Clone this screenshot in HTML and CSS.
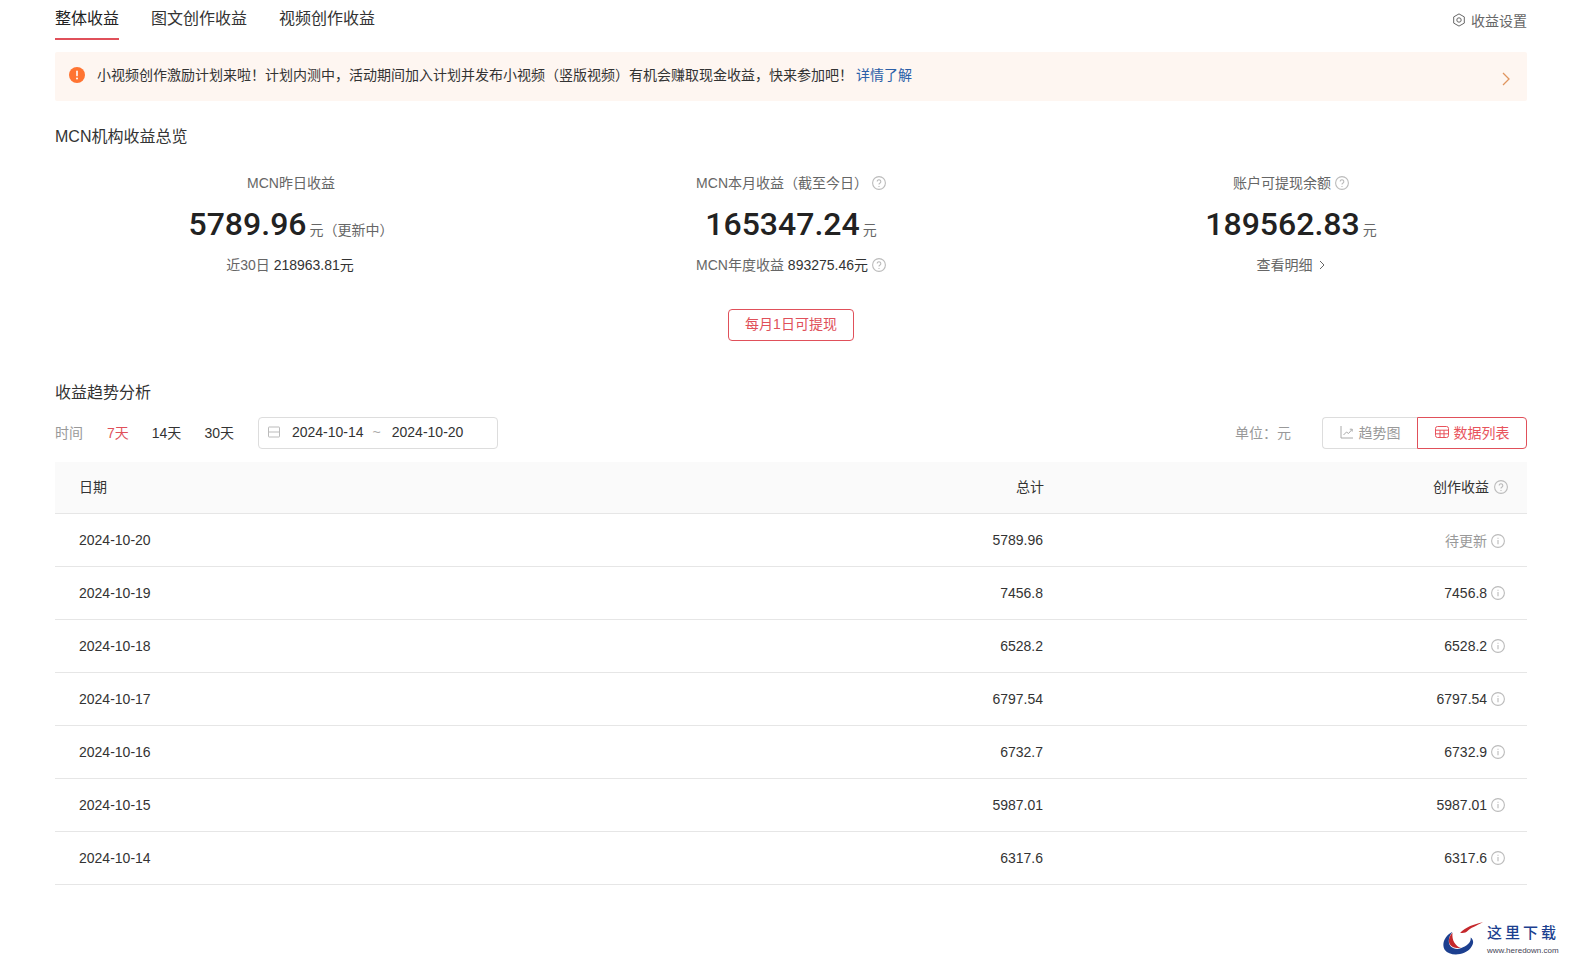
FILE: index.html
```html
<!DOCTYPE html>
<html>
  <head>
    <meta charset="UTF-8" />
    <meta name="viewport" content="width=device-width, initial-scale=1.0" />
    <title>收益</title>
    <link rel="stylesheet" href="styles.css">
  </head>
  <body>
    <div class="page">
      <div class="tabs">
        <div class="tab-list">
          <div class="tab active">整体收益</div>
          <div class="tab">图文创作收益</div>
          <div class="tab">视频创作收益</div>
        </div>
        <div class="settings">
          <svg class="settings-icon" viewBox="0 0 14 14" fill="none" stroke="#666" stroke-width="1">
            <path d="M7 .9l5.3 3v6.2L7 13.1l-5.3-3V3.900z" stroke-linejoin="round"/>
            <circle cx="7" cy="7" r="2.200"/>
          </svg>
          <span>收益设置</span>
        </div>
      </div>

      <div class="notice">
        <svg class="notice-icon" viewBox="0 0 16 16">
          <circle cx="8" cy="8" r="8" fill="#ff7432"/>
          <rect x="7.200" y="3.600" width="1.600" height="5.800" rx=".8" fill="#fff"/>
          <circle cx="8" cy="11.500" r="1" fill="#fff"/>
        </svg>
        <div class="notice-text">小视频创作激励计划来啦！计划内测中，活动期间加入计划并发布小视频（竖版视频）有机会赚取现金收益，快来参加吧！<a class="notice-link">详情了解</a></div>
        <svg class="notice-arrow" viewBox="0 0 8 14" fill="none" stroke="#e0955f" stroke-width="1.300">
          <path d="M1 1l6 6-6 6"/>
        </svg>
      </div>

      <h2 class="section-title overview-title">MCN机构收益总览</h2>

      <div class="stats">
        <div class="stat">
          <div class="stat-label">MCN昨日收益</div>
          <div class="stat-value"><b>5789.96</b><span class="unit">元（更新中）</span></div>
          <div class="stat-sub shift-sub">近30日 <em>218963.81元</em></div>
        </div>
        <div class="stat">
          <div class="stat-label">MCN本月收益（截至今日）
            <svg class="help" viewBox="0 0 14 14"><circle cx="7" cy="7" r="6.400"/><path d="M5.200 5.500a1.800 1.800 0 1 1 2.800 1.500c-.7.400-1 .8-1 1.500"/><path d="M7 10v.9"/></svg>
          </div>
          <div class="stat-value"><b>165347.24</b><span class="unit">元</span></div>
          <div class="stat-sub">MCN年度收益 <em>893275.46元</em>
            <svg class="help" viewBox="0 0 14 14"><circle cx="7" cy="7" r="6.400"/><path d="M5.200 5.500a1.800 1.800 0 1 1 2.800 1.500c-.7.400-1 .8-1 1.500"/><path d="M7 10v.9"/></svg>
          </div>
        </div>
        <div class="stat">
          <div class="stat-label">账户可提现余额
            <svg class="help" viewBox="0 0 14 14"><circle cx="7" cy="7" r="6.400"/><path d="M5.200 5.500a1.800 1.800 0 1 1 2.800 1.500c-.7.400-1 .8-1 1.500"/><path d="M7 10v.9"/></svg>
          </div>
          <div class="stat-value"><b>189562.83</b><span class="unit">元</span></div>
          <div class="stat-sub">查看明细
            <svg class="detail-arrow" viewBox="0 0 6 10" fill="none" stroke="#666" stroke-width="1"><path d="M1 1l4 4-4 4"/></svg>
          </div>
        </div>
      </div>

      <div class="withdraw-wrap">
        <div class="withdraw">每月1日可提现</div>
      </div>

      <h2 class="section-title trend-title">收益趋势分析</h2>

      <div class="filters">
        <div class="filter-left">
          <span class="filter-label">时间</span>
          <span class="range active">7天</span>
          <span class="range">14天</span>
          <span class="range last">30天</span>
          <div class="date-picker">
            <svg class="date-icon" viewBox="0 0 12 12" fill="none" stroke="#bbb" stroke-width="1"><rect x=".5" y="1" width="11" height="10" rx=".5"/><path d="M.5 6h11"/></svg>
            <span>2024-10-14</span>
            <span class="tilde">~</span>
            <span>2024-10-20</span>
          </div>
        </div>
        <div class="filter-right">
          <span class="unit-label">单位：元</span>
          <div class="switch">
            <div class="switch-item">
              <svg class="switch-icon" viewBox="0 0 14 14" fill="none" stroke="#aaa" stroke-width="1"><path d="M1 1v12h12"/><path d="M3.500 10l3-3 2 1.500L12 4.500"/><path d="M9.800 4.200h2.400v2.400"/></svg>
              趋势图
            </div>
            <div class="switch-item selected">
              <svg class="switch-icon" viewBox="0 0 14 14" fill="none" stroke="#e8535c" stroke-width="1"><rect x=".5" y="1.500" width="13" height="11" rx="2"/><path d="M.5 5.200h13M.5 8.800h13M5 5.200v7.300M9 5.200v7.300"/></svg>
              数据列表
            </div>
          </div>
        </div>
      </div>

      <div class="table">
        <div class="row head">
          <div>日期</div>
          <div class="num">总计</div>
          <div class="num income">创作收益
            <svg class="help" viewBox="0 0 14 14"><circle cx="7" cy="7" r="6.400"/><path d="M5.200 5.500a1.800 1.800 0 1 1 2.800 1.500c-.7.400-1 .8-1 1.500"/><path d="M7 10v.9"/></svg>
          </div>
        </div>
        <div class="row">
          <div>2024-10-20</div>
          <div class="num">5789.96</div>
          <div class="num income pending">待更新
            <svg class="info" viewBox="0 0 14 14"><circle cx="7" cy="7" r="6.400"/><path d="M7 6v4.200M7 3.700v1"/></svg>
          </div>
        </div>
        <div class="row">
          <div>2024-10-19</div>
          <div class="num">7456.8</div>
          <div class="num income">7456.8
            <svg class="info" viewBox="0 0 14 14"><circle cx="7" cy="7" r="6.400"/><path d="M7 6v4.200M7 3.700v1"/></svg>
          </div>
        </div>
        <div class="row">
          <div>2024-10-18</div>
          <div class="num">6528.2</div>
          <div class="num income">6528.2
            <svg class="info" viewBox="0 0 14 14"><circle cx="7" cy="7" r="6.400"/><path d="M7 6v4.200M7 3.700v1"/></svg>
          </div>
        </div>
        <div class="row">
          <div>2024-10-17</div>
          <div class="num">6797.54</div>
          <div class="num income">6797.54
            <svg class="info" viewBox="0 0 14 14"><circle cx="7" cy="7" r="6.400"/><path d="M7 6v4.200M7 3.700v1"/></svg>
          </div>
        </div>
        <div class="row">
          <div>2024-10-16</div>
          <div class="num">6732.7</div>
          <div class="num income">6732.9
            <svg class="info" viewBox="0 0 14 14"><circle cx="7" cy="7" r="6.400"/><path d="M7 6v4.200M7 3.700v1"/></svg>
          </div>
        </div>
        <div class="row">
          <div>2024-10-15</div>
          <div class="num">5987.01</div>
          <div class="num income">5987.01
            <svg class="info" viewBox="0 0 14 14"><circle cx="7" cy="7" r="6.400"/><path d="M7 6v4.200M7 3.700v1"/></svg>
          </div>
        </div>
        <div class="row">
          <div>2024-10-14</div>
          <div class="num">6317.6</div>
          <div class="num income">6317.6
            <svg class="info" viewBox="0 0 14 14"><circle cx="7" cy="7" r="6.400"/><path d="M7 6v4.200M7 3.700v1"/></svg>
          </div>
        </div>
      </div>
    </div>

    <!-- watermark sits over the page corner -->
    <div class="watermark">
      <svg class="watermark-logo" viewBox="0 0 44 38">
        <path d="M11 13C3 17-1 26 3 32c5 7 21 6 27-2 4-5 3-9 0-11 1 6-6 11-14 12C7 31 4 22 11 13z" fill="#1c3f8f"/>
        <path d="M11 14c-4 4-5 10-2 13 3 3 7 3 11 3-6-2-10-8-9-16z" fill="#c5282c"/>
        <path d="M19 14c6-6 14-9 24-11-8 4-13 6-16 9-2 2-5 3-8 2z" fill="#c5282c"/>
      </svg>
      <div class="watermark-text">
        <div class="watermark-name">这里下载</div>
        <div class="watermark-url">www.heredown.com</div>
      </div>
    </div>
  </body>
</html>
```

FILE: styles.css
```css
body {
  margin: 0;
  background-color: #fff;
  color: #222;
  font-family: "Liberation Sans", "Noto Sans CJK SC", sans-serif;
  font-size: 14px;
}

.page {
  padding: 0 42px 0 55px;
}

.tabs {
  display: flex;
  justify-content: space-between;
  height: 40px;
}

.tab-list {
  display: flex;
  gap: 32px;
}

.tab {
  font-size: 16px;
  line-height: 37px;
  color: #333;
  box-sizing: border-box;
  height: 40px;
}

.tab.active {
  color: #222;
  border-bottom: 2px solid #e0505a;
}

.settings {
  display: flex;
  align-items: center;
  gap: 5px;
  height: 40px;
  color: #666;
  font-size: 14px;
}

.settings-icon {
  width: 14px;
  height: 14px;
}

.notice {
  display: flex;
  align-items: flex-start;
  height: 49px;
  margin-top: 12px;
  background-color: #fef6f1;
  border-radius: 2px;
}

.notice-icon {
  width: 16px;
  height: 16px;
  margin: 15px 12px 0 14px;
}

.notice-text {
  font-size: 14px;
  line-height: 47px;
  color: #333;
  white-space: nowrap;
}

.notice-link {
  color: #2b5fa8;
  margin-left: 3px;
}

.notice-arrow {
  width: 8px;
  height: 14px;
  margin: 20px 17px 0 auto;
}

.section-title {
  margin: 0;
  font-size: 16px;
  font-weight: 400;
  color: #333;
  line-height: 24px;
}

.overview-title {
  margin-top: 24px;
}

.stats {
  display: grid;
  grid-template-columns: repeat(3, 500px);
  justify-content: center;
  margin-top: 23px;
  text-align: center;
}

.stat-label {
  font-size: 14px;
  line-height: 22px;
  color: #666;
}

.stat-value {
  margin-top: 10px;
  height: 40px;
  line-height: 40px;
}

.stat-value b {
  font-family: Roboto, "Liberation Sans", sans-serif;
  font-size: 32px;
  font-weight: 500;
  color: #222;
}

.unit {
  margin-left: 3px;
  font-size: 14px;
  color: #666;
}

.stat-sub {
  margin-top: 10px;
  line-height: 22px;
  color: #666;
}

.stat-sub em {
  font-style: normal;
  color: #333;
}

.shift-sub {
  margin-right: 2px;
}

.help,
.info {
  width: 14px;
  height: 14px;
  vertical-align: -2px;
  fill: none;
  stroke: #bbb;
  stroke-width: 1.100;
}

.detail-arrow {
  width: 6px;
  height: 10px;
  margin-left: 3px;
}

.withdraw-wrap {
  display: flex;
  justify-content: center;
  margin-top: 33px;
}

.withdraw {
  box-sizing: border-box;
  width: 126px;
  height: 32px;
  border: 1px solid #e0505a;
  border-radius: 4px;
  color: #e0505a;
  font-size: 14px;
  line-height: 28px;
  text-align: center;
}

.trend-title {
  margin-top: 40px;
}

.filters {
  display: flex;
  justify-content: space-between;
  align-items: center;
  height: 32px;
  margin-top: 12px;
}

.filter-left,
.filter-right,
.date-picker,
.switch,
.switch-item {
  display: flex;
  align-items: center;
}

.filter-label {
  color: #999;
  margin: 0 24px 2px 0;
}

.range {
  margin: 0 23px 2px 0;
  color: #333;
}

.range.last {
  margin-right: 24px;
}

.range.active {
  color: #e0505a;
}

.date-picker {
  box-sizing: border-box;
  width: 240px;
  height: 32px;
  border: 1px solid #ddd;
  border-radius: 4px;
  padding: 0 0 2px 9px;
  color: #333;
}

.date-icon {
  width: 12px;
  height: 12px;
  margin-right: 12px;
}

.tilde {
  color: #aaa;
  margin: 0 11px 0 9px;
}

.unit-label {
  color: #999;
  margin: 0 31px 2px 0;
}

.switch-item {
  box-sizing: border-box;
  height: 32px;
  justify-content: center;
  gap: 5px;
  width: 95px;
  padding-bottom: 2px;
  border: 1px solid #ddd;
  border-right: none;
  border-radius: 4px 0 0 4px;
  color: #999;
}

.switch-item.selected {
  width: 110px;
  border: 1px solid #e0505a;
  border-radius: 0 4px 4px 0;
  color: #e8535c;
}

.switch-icon {
  width: 14px;
  height: 14px;
}

.table {
  margin-top: 13px;
}

.row {
  display: grid;
  grid-template-columns: 1fr 300px 484px;
  align-items: center;
  box-sizing: border-box;
  height: 53px;
  padding-left: 24px;
  border-bottom: 1px solid #e6e6e6;
  color: #333;
}

.row.head {
  grid-template-columns: 1fr 301px 483px;
  height: 52px;
  padding-bottom: 3px;
  background-color: #fafafa;
}

.num {
  text-align: right;
}

.income {
  padding-right: 22px;
}

.head .income {
  padding-right: 19px;
}

.head .help {
  margin-left: 1px;
}

.pending {
  color: #999;
}

.watermark {
  position: absolute;
  left: 1442px;
  top: 919px;
  display: flex;
  gap: 3px;
  width: 127px;
  height: 40px;
}

.watermark-logo {
  width: 42px;
  height: 37px;
  flex: none;
}

.watermark-name {
  font-family: "Noto Sans CJK SC", sans-serif;
  font-size: 15px;
  line-height: 20px;
  letter-spacing: 3px;
  color: #1c3f8f;
  font-weight: 500;
  white-space: nowrap;
  margin-top: 3px;
}

.watermark-url {
  font-size: 8px;
  line-height: 10px;
  color: #445;
  white-space: nowrap;
  margin-top: 4px;
}
```
